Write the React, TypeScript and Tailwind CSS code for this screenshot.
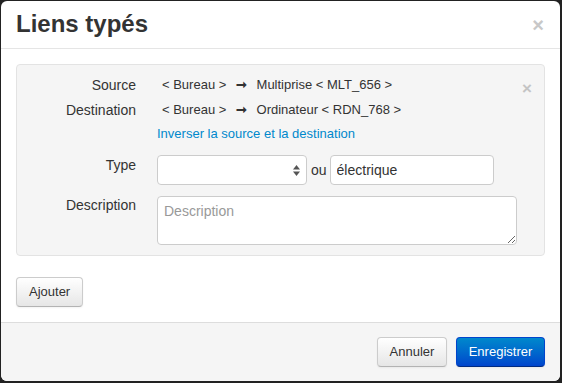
import { useState } from "react";

function Row({ label, children }: { label: string; children: React.ReactNode }) {
  return (
    <div className="grid grid-cols-[100px_1fr] gap-x-[21px] leading-[20px]">
      <div className="text-right text-[14px] leading-[20px] text-[#333]">{label}</div>
      <div className="text-[13px] leading-[20px]">{children}</div>
    </div>
  );
}

export default function App() {
  const [type, setType] = useState("");
  const [custom, setCustom] = useState("électrique");
  const [desc, setDesc] = useState("");

  return (
    <div className="h-[383px] w-[562px] bg-[#222] pl-px pt-px font-['Liberation_Sans',Arial,sans-serif] text-[#333]">
      <div className="flex h-[380px] w-[559px] flex-col overflow-hidden rounded-[6px] bg-white">
        {/* header */}
        <div className="flex h-[48px] shrink-0 items-center justify-between border-b border-[#e5e5e5] px-[15px]">
          <h3 className="text-[24px] font-bold leading-[1.1] text-[#333]">Liens typés</h3>
          <button type="button" className="mr-px text-[20px] font-bold leading-none text-[#c8c8c8]">
            ×
          </button>
        </div>

        {/* body */}
        <div className="flex-1 px-[15px] pt-[15px]">
          <div className="relative rounded-[4px] border border-[#e3e3e3] bg-[#f5f5f5] pb-[10px] pl-[19px] pt-[10px]">
            <button
              type="button"
              className="absolute right-[12px] top-[15px] text-[17px] font-bold leading-none text-[#c4c4c4]"
            >
              ×
            </button>

            <div className="flex flex-col">
              <div className="h-[25px]">
                <Row label="Source">
                  <span className="pl-[5px]">
                    &lt; Bureau &gt; <span className="mx-[6px] font-bold">➞</span> Multiprise &lt; MLT_656 &gt;
                  </span>
                </Row>
              </div>
              <div className="h-[24px]">
                <Row label="Destination">
                  <span className="pl-[5px]">
                    &lt; Bureau &gt; <span className="mx-[6px] font-bold">➞</span> Ordinateur &lt; RDN_768 &gt;
                  </span>
                </Row>
              </div>
              <Row label="">
                <a href="#" className="text-[#0088cc]">
                  Inverser la source et la destination
                </a>
              </Row>

              <div className="mt-[11px]">
                <Row label="Type">
                  <div className="flex items-center">
                    <div className="relative h-[30px] w-[150px]">
                      <select
                        value={type}
                        onChange={(e) => setType(e.target.value)}
                        className="h-full w-full appearance-none rounded-[4px] border border-[#ccc] bg-white px-[6px] text-[14px] outline-none"
                      >
                        <option value=""></option>
                        <option value="reseau">réseau</option>
                      </select>
                      <svg
                        className="pointer-events-none absolute right-[7px] top-[10px]"
                        width="7"
                        height="11"
                        viewBox="0 0 7 11"
                      >
                        <path d="M3.5 0L7 4.5H0Z" fill="#555" />
                        <path d="M3.5 11L7 6.5H0Z" fill="#555" />
                      </svg>
                    </div>
                    <span className="ml-[4px] mr-[3px] text-[14px]">ou</span>
                    <input
                      value={custom}
                      onChange={(e) => setCustom(e.target.value)}
                      className="h-[30px] w-[164px] rounded-[4px] border border-[#ccc] bg-white px-[6px] text-[14px] text-[#333] outline-none"
                    />
                  </div>
                </Row>
              </div>

              <div className="mt-[10px]">
                <Row label="Description">
                  <textarea
                    value={desc}
                    onChange={(e) => setDesc(e.target.value)}
                    placeholder="Description"
                    className="mt-px block h-[49px] w-[360px] rounded-[4px] border border-[#ccc] bg-white px-[6px] py-[4px] text-[14px] leading-[20px] text-[#333] outline-none placeholder:text-[#999]"
                  />
                </Row>
              </div>
            </div>
          </div>

          <button
            type="button"
            className="mt-[21px] h-[30px] rounded-[4px] border border-[#ccc] border-b-[#b3b3b3] bg-gradient-to-b from-white to-[#e6e6e6] px-[12px] text-[13px] text-[#333] shadow-[inset_0_1px_0_rgba(255,255,255,0.2),0_1px_2px_rgba(0,0,0,0.05)]"
          >
            Ajouter
          </button>
        </div>

        {/* footer */}
        <div className="flex h-[59px] shrink-0 items-center justify-end gap-[9px] border-t border-[#ddd] bg-[#f5f5f5] px-[15px]">
          <button
            type="button"
            className="h-[30px] w-[70px] rounded-[4px] border border-[#ccc] border-b-[#b3b3b3] bg-gradient-to-b from-white to-[#e6e6e6] text-[13px] text-[#333] shadow-[0_1px_2px_rgba(0,0,0,0.05)]"
          >
            Annuler
          </button>
          <button
            type="button"
            className="h-[30px] w-[89px] rounded-[4px] border border-[#0044cc] border-b-[#002a80] bg-gradient-to-b from-[#0088cc] to-[#0044cc] text-[13px] text-white shadow-[0_1px_2px_rgba(0,0,0,0.05)]"
          >
            Enregistrer
          </button>
        </div>
      </div>
    </div>
  );
}
